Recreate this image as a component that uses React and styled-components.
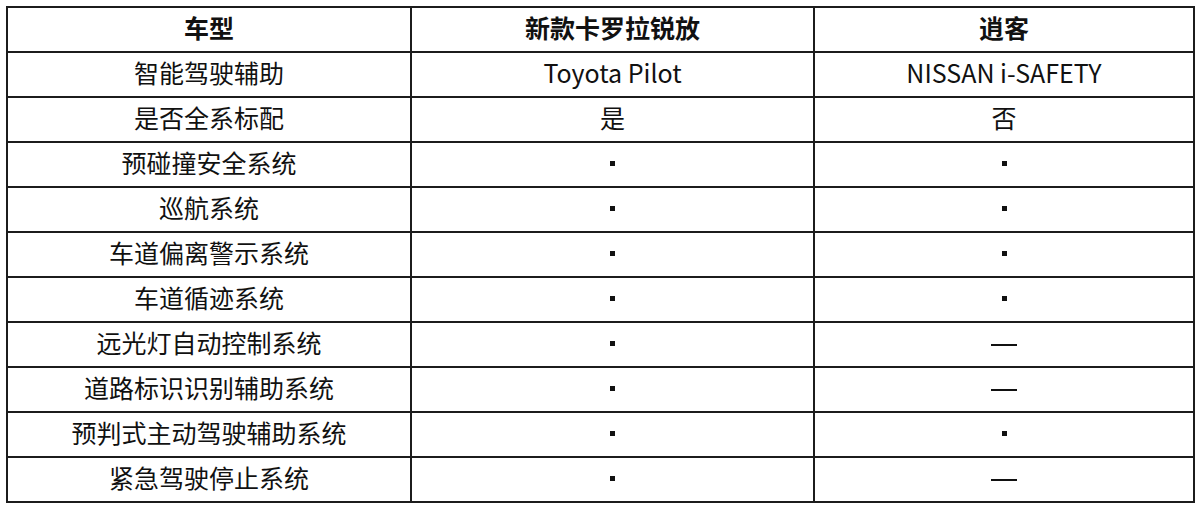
import React from "react";
import styled, { createGlobalStyle } from "styled-components";

const GlobalStyle = createGlobalStyle`
	html, body {
		margin: 0;
		padding: 0;
		background: #fff;
	}
	body {
		font-family: "Noto Sans CJK SC", "Noto Sans", sans-serif;
		color: #111;
	}
`;

const Page = styled.div`
	padding: 6px 0 0 6px;
`;

const Grid = styled.div`
	display: grid;
	grid-template-columns: 404px 403px 380px;
	grid-auto-rows: 45px;
	width: 1189px;
	border-top: 2px solid #1c1c1c;
	border-left: 2px solid #1c1c1c;
	box-sizing: border-box;
`;

const Cell = styled.div`
	display: flex;
	align-items: center;
	justify-content: center;
	box-sizing: border-box;
	border-right: 2px solid #1c1c1c;
	border-bottom: 2px solid #1c1c1c;
	font-size: 25px;
	font-weight: ${(props) => (props.head ? 700 : 400)};
	line-height: 1;
	padding-bottom: 4px;
`;

const Dot = styled.span`
	display: block;
	width: 5px;
	height: 5px;
	margin-top: 2px;
	background: #111;
`;

const Dash = styled.span`
	display: block;
	width: 26px;
	height: 2px;
	margin-top: 4px;
	background: #111;
`;

const rows = [
	["智能驾驶辅助", "Toyota Pilot", "NISSAN i-SAFETY"],
	["是否全系标配", "是", "否"],
	["预碰撞安全系统", "dot", "dot"],
	["巡航系统", "dot", "dot"],
	["车道偏离警示系统", "dot", "dot"],
	["车道循迹系统", "dot", "dot"],
	["远光灯自动控制系统", "dot", "dash"],
	["道路标识识别辅助系统", "dot", "dash"],
	["预判式主动驾驶辅助系统", "dot", "dot"],
	["紧急驾驶停止系统", "dot", "dash"],
];

const renderValue = (v) => {
	if (v === "dot") return <Dot />;
	if (v === "dash") return <Dash />;
	return v;
};

const App = () => {
	return (
		<Page>
			<GlobalStyle />
			<Grid>
				<Cell head>车型</Cell>
				<Cell head>新款卡罗拉锐放</Cell>
				<Cell head>逍客</Cell>
				{rows.map((r) =>
					r.map((v, i) => <Cell key={r[0] + i}>{renderValue(v)}</Cell>)
				)}
			</Grid>
		</Page>
	);
};

export default App;
